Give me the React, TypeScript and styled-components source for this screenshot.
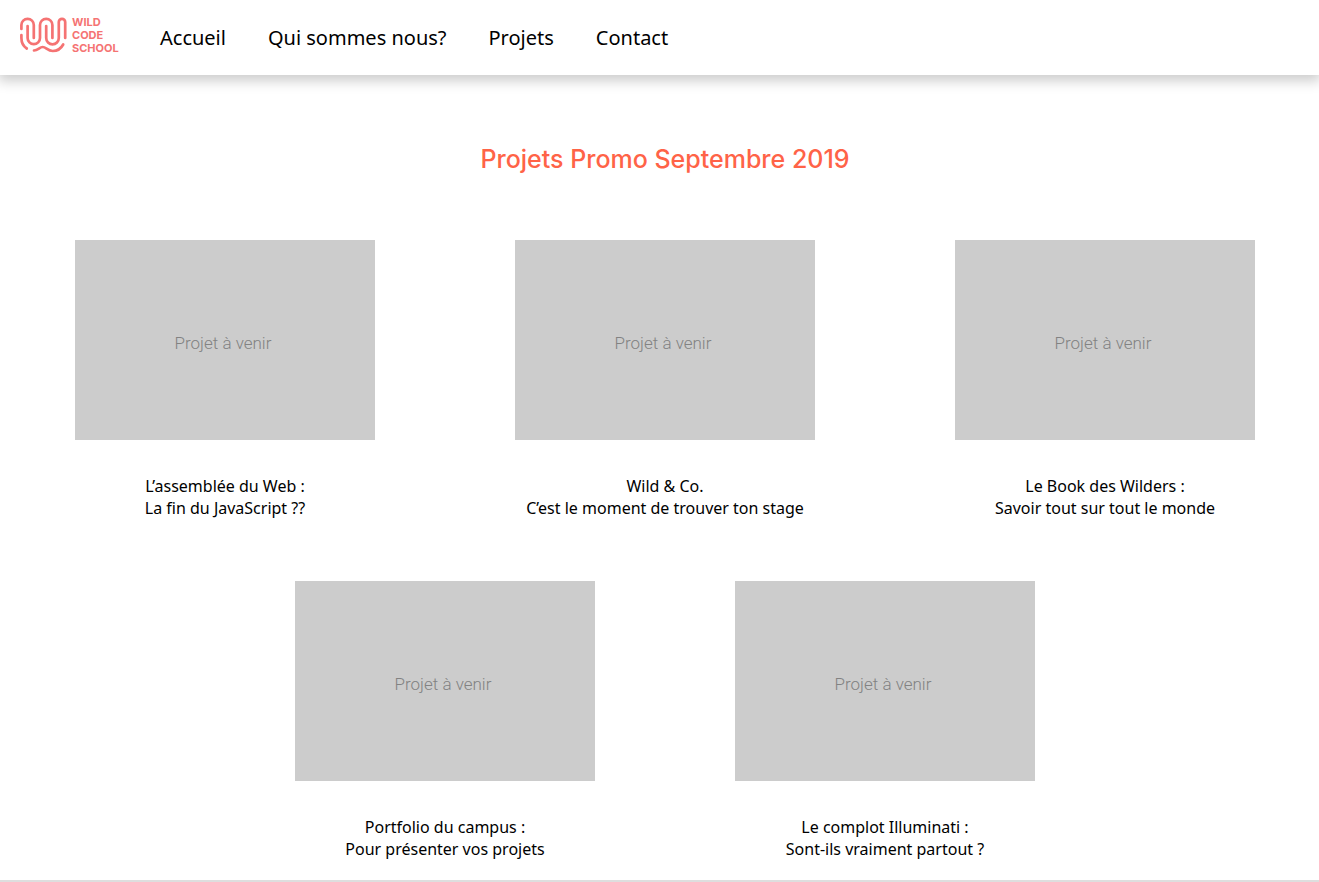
import React from "react";
import styled, { createGlobalStyle } from "styled-components";

const bodyFont = `"Noto Sans", "Open Sans", sans-serif`;

const GlobalStyle = createGlobalStyle`
  *, *::before, *::after { box-sizing: border-box; }
  body { margin: 0; background: #fff; color: #000; font-family: ${bodyFont}; }
`;

const Page = styled.div`
  min-height: 100vh;
  display: flex;
  flex-direction: column;
`;

const Header = styled.header`
  display: flex;
  align-items: center;
  gap: 40px;
  height: 75px;
  padding: 0 20px;
  background: #fff;
  box-shadow: 0 4px 12px 2px rgba(0, 0, 0, 0.2);
`;

const Logo = styled.a`
  display: flex;
  align-items: center;
  gap: 5px;
  width: 100px;
  margin-bottom: 5px;
  color: #f57373;
  text-decoration: none;
`;

const LogoMark = styled.svg`
  flex: none;
  width: 47px;
  height: 36px;
  fill: none;
  stroke: currentColor;
  stroke-width: 2.7;
  stroke-linecap: round;
  stroke-linejoin: round;
`;

const LogoName = styled.span`
  display: flex;
  flex-direction: column;
  font: 700 11px/13px Inter, sans-serif;
`;

const Nav = styled.nav`
  display: flex;
  gap: 42px;
`;

const NavLink = styled.a`
  color: inherit;
  font-size: 20px;
  line-height: 28px;
  text-decoration: none;
`;

const Main = styled.main`
  flex: 1;
  padding: 68px 0 19px 11px;
`;

const Title = styled.h1`
  margin: 0 0 65px;
  color: tomato;
  font: 500 25px/32px Inter, sans-serif;
  text-align: center;
`;

const Projects = styled.div`
  display: flex;
  flex-wrap: wrap;
  justify-content: center;
  gap: 62px 140px;
`;

const Card = styled.figure`
  width: 300px;
  margin: 0;
`;

const Placeholder = styled.div`
  display: flex;
  align-items: center;
  justify-content: center;
  height: 200px;
  padding: 6px 4px 0 0;
  margin-bottom: 35px;
  background: #ccc;
  color: #828282;
  font: 300 17px/24px Roboto, sans-serif;
`;

const Caption = styled.figcaption`
  font-size: 16px;
  line-height: 22px;
  text-align: center;
  white-space: nowrap;
`;

const Footer = styled.footer`
  height: 2px;
  background: #dedede;
`;

const links = ["Accueil", "Qui sommes nous?", "Projets", "Contact"];

const projects = [
  ["L’assemblée du Web :", "La fin du JavaScript ??"],
  ["Wild & Co.", "C’est le moment de trouver ton stage"],
  ["Le Book des Wilders :", "Savoir tout sur tout le monde"],
  ["Portfolio du campus :", "Pour présenter vos projets"],
  ["Le complot Illuminati :", "Sont-ils vraiment partout ?"],
];

export default function App() {
  return (
    <Page>
      <GlobalStyle />
      <Header>
        <Logo href="#">
          <LogoMark viewBox="0 0 47 36" aria-hidden="true">
            <path d="M1.4 12V8a6.2 6.2 0 0 1 12.4 0v13" />
            <path d="M7.6 9v12a6.2 6.2 0 0 0 12.4 0V8a6.2 6.2 0 0 1 12.4 0v13" />
            <path d="M26.2 9v12a6.2 6.2 0 0 0 12.6 0V5a3.2 3.2 0 0 1 6.4 0v16" />
            <path d="M1.4 18v3q0 7 5.4 10.5" />
            <path d="M14 33.5c4 0 5.5-3.5 8.7-3.5s5 4 10 4q7 0 10.5-6.5" />
          </LogoMark>
          <LogoName>
            <span>WILD</span>
            <span>CODE</span>
            <span>SCHOOL</span>
          </LogoName>
        </Logo>
        <Nav>
          {links.map((label) => (
            <NavLink href="#" key={label}>{label}</NavLink>
          ))}
        </Nav>
      </Header>
      <Main>
        <Title>Projets Promo Septembre 2019</Title>
        <Projects>
          {projects.map(([name, tagline]) => (
            <Card key={name}>
              <Placeholder>Projet à venir</Placeholder>
              <Caption>{name}<br />{tagline}</Caption>
            </Card>
          ))}
        </Projects>
      </Main>
      <Footer />
    </Page>
  );
}
